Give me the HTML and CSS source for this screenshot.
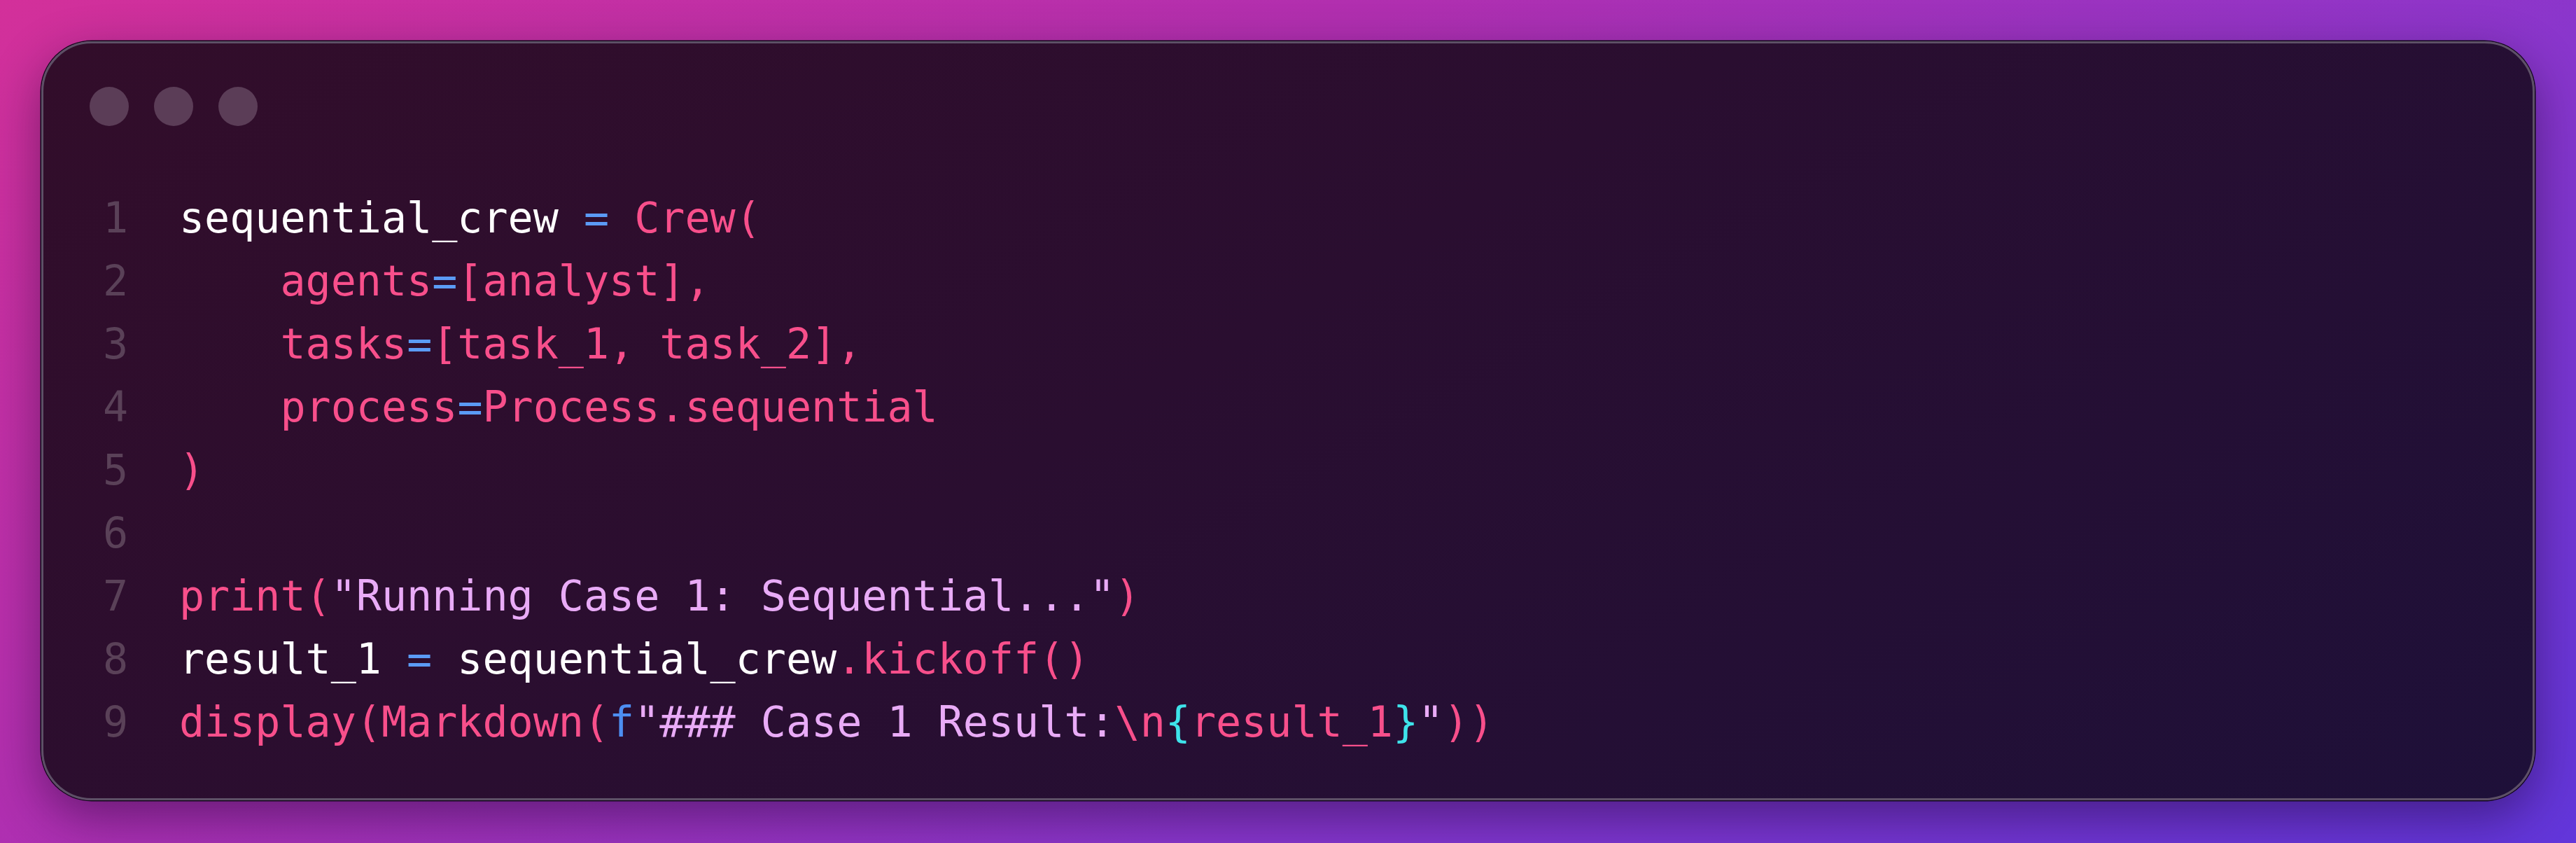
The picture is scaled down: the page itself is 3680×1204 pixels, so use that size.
FILE: index.html
```html
<!DOCTYPE html>
<html lang="en">
<head>
<meta charset="utf-8">
<title>Code</title>
<link rel="stylesheet" href="styles.css">
</head>
<body>
<div class="window">
  <div class="titlebar">
    <span class="dot"></span><span class="dot"></span><span class="dot"></span>
  </div>
  <div class="code">
    <div class="gutter">
      <div>1</div><div>2</div><div>3</div><div>4</div><div>5</div><div>6</div><div>7</div><div>8</div><div>9</div>
    </div>
    <pre class="lines"><span class="w">sequential_crew</span> <span class="b">=</span> <span class="p">Crew(</span>
    <span class="p">agents</span><span class="b">=</span><span class="p">[analyst],</span>
    <span class="p">tasks</span><span class="b">=</span><span class="p">[task_1, task_2],</span>
    <span class="p">process</span><span class="b">=</span><span class="p">Process.sequential</span>
<span class="p">)</span>

<span class="p">print(</span><span class="s">"Running Case 1: Sequential..."</span><span class="p">)</span>
<span class="w">result_1</span> <span class="b">=</span> <span class="w">sequential_crew</span><span class="p">.kickoff()</span>
<span class="p">display(Markdown(</span><span class="f">f</span><span class="s">"### Case 1 Result:</span><span class="p">\n</span><span class="c">{</span><span class="p">result_1</span><span class="c">}</span><span class="s">"</span><span class="p">))</span></pre>
  </div>
</div>
</body>
</html>
```
FILE: styles.css
```css
html, body {
  margin: 0;
  padding: 0;
}
body {
  width: 3680px;
  height: 1204px;
  box-sizing: border-box;
  padding: 59px 59px 61px 59px;
  background: linear-gradient(150deg, #d3309a 0%, #b02fb0 35%, #8a36cc 65%, #6236da 100%);
  overflow: hidden;
}
.window {
  box-sizing: border-box;
  height: 1084px;
  border-radius: 72px;
  border: 3px solid #5d5066;
  background: linear-gradient(150deg, #320d2a 0%, #2a0e30 45%, #1e1039 100%);
  box-shadow: 0 0 0 1.5px #12081a, 0 24px 70px rgba(20, 0, 40, 0.45);
  padding: 62px 0 0 66px;
  display: flex;
  flex-direction: column;
}
.titlebar {
  display: flex;
  gap: 36px;
  height: 56px;
}
.dot {
  width: 56px;
  height: 56px;
  border-radius: 50%;
  background: #5b3d57;
}
.code {
  display: flex;
  margin-top: 86px;
  margin-left: 19px;
  font-family: "DejaVu Sans Mono", "Liberation Mono", monospace;
  font-size: 60px;
  line-height: 90px;
}
.gutter {
  width: 36px;
  color: #5a4158;
  text-align: right;
}
.lines {
  margin: 0 0 0 73px;
  font: inherit;
  color: #ffffff;
  white-space: pre;
}
.w { color: #ffffff; }
.p { color: #f84f8b; }
.b { color: #5b9bf6; }
.s { color: #e9abf7; }
.f { color: #4d8ef2; }
.c { color: #3ee3ea; }
```
